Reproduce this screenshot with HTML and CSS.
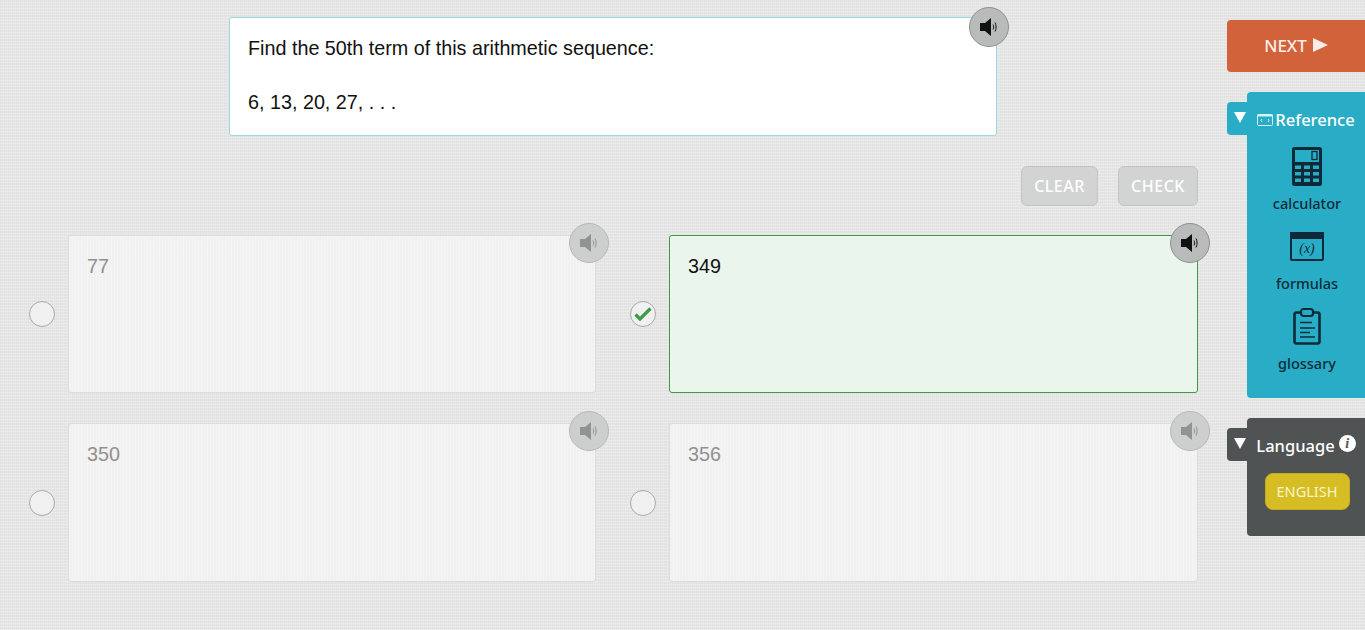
FILE: index.html
```html
<!DOCTYPE html>
<html lang="en">
<head>
    <meta charset="UTF-8">
    <title>Arithmetic sequence question</title>
    <link rel="stylesheet" href="styles.css">
</head>
<body>
    <svg class="defs" width="0" height="0">
        <symbol id="speaker" viewBox="0 0 24 24">
            <path d="M3 8h5l6-5v18l-6-5H3z" fill="currentColor"/>
            <path d="M16 9.500c.9 1.600.9 3.400 0 5M18 7.500c1.500 2.800 1.500 6.200 0 9" fill="none" stroke="currentColor" stroke-width="1"/>
        </symbol>
    </svg>

    <div class="page">
        <main class="main">
            <div class="prompt">
                <p>Find the 50th term of this arithmetic sequence:</p>
                <p>6, 13, 20, 27, . . .</p>
                <button class="speak speak-prompt"><svg><use href="#speaker"/></svg></button>
            </div>

            <div class="actions">
                <button class="action">CLEAR</button>
                <button class="action">CHECK</button>
            </div>

            <div class="answers">
                <div class="answer">
                    <span class="radio"></span>
                    <div class="card">77<button class="speak"><svg><use href="#speaker"/></svg></button></div>
                </div>
                <div class="answer selected">
                    <span class="radio">
                        <svg viewBox="0 0 24 24" width="24" height="24"><path d="M4.500 12.500l4.500 4.500L19.500 6.500" fill="none" stroke="#3d9a45" stroke-width="3.200"/></svg>
                    </span>
                    <div class="card">349<button class="speak"><svg><use href="#speaker"/></svg></button></div>
                </div>
                <div class="answer">
                    <span class="radio"></span>
                    <div class="card">350<button class="speak"><svg><use href="#speaker"/></svg></button></div>
                </div>
                <div class="answer">
                    <span class="radio"></span>
                    <div class="card">356<button class="speak"><svg><use href="#speaker"/></svg></button></div>
                </div>
            </div>
        </main>

        <aside class="side">
            <button class="next">NEXT <svg viewBox="0 0 15 14" width="15" height="14"><path d="M0 0l15 7-15 7z" fill="currentColor"/></svg></button>

            <section class="panel panel-reference">
                <span class="tab"><svg viewBox="0 0 12 11" width="12" height="11"><path d="M0 0h12L6 11z" fill="#fff"/></svg></span>
                <h3 class="panel-title panel-title-tight">
                    <svg viewBox="0 0 16 12" width="16" height="12">
                        <rect x="0.500" y="0.500" width="15" height="11" rx="1" fill="none" stroke="#d8f1f6"/>
                        <rect x="0.500" y="0.500" width="15" height="2" fill="#d8f1f6"/>
                        <path d="M5 5l-1 1.500L5 8M11 5l1 1.500L11 8" fill="none" stroke="#d8f1f6"/>
                    </svg>Reference
                </h3>
                <div class="tool">
                    <svg viewBox="0 0 30 39" width="30" height="39">
                        <rect width="30" height="39" rx="2.500" fill="#0e2a38"/>
                        <rect x="3" y="3" width="24" height="12" fill="#29adc6"/>
                        <rect x="20" y="4.500" width="5" height="8" fill="none" stroke="#0e2a38" stroke-width="1.300"/>
                        <path d="M3 18.500h6v3.500H3zM12 18.500h6v3.500h-6zM21 18.500h6v3.500h-6zM3 25h6v3.500H3zM12 25h6v3.500h-6zM21 25h6v3.500h-6zM3 31.500h6V35H3zM12 31.500h6V35h-6zM21 31.500h6V35h-6z" fill="#29adc6"/>
                    </svg>
                    <span>calculator</span>
                </div>
                <div class="tool">
                    <svg viewBox="0 0 34 29" width="34" height="29">
                        <rect x="1" y="1" width="32" height="27" rx="1" fill="none" stroke="#0e2a38" stroke-width="2"/>
                        <rect width="34" height="7" fill="#0e2a38"/>
                        <text x="17" y="21" class="formula">(x)</text>
                    </svg>
                    <span>formulas</span>
                </div>
                <div class="tool">
                    <svg viewBox="0 0 30 38" width="30" height="38">
                        <rect x="2.500" y="5" width="25" height="31" rx="2" fill="none" stroke="#0e2a38" stroke-width="2.600"/>
                        <rect x="9" y="1.500" width="12" height="7" rx="2.500" fill="#29adc6" stroke="#0e2a38" stroke-width="2.200"/>
                        <path d="M8 15h12M8 20.500h15M8 25h10M8 29.500h15" stroke="#0e2a38" stroke-width="1.500"/>
                    </svg>
                    <span>glossary</span>
                </div>
            </section>

            <section class="panel panel-language">
                <span class="tab"><svg viewBox="0 0 12 11" width="12" height="11"><path d="M0 0h12L6 11z" fill="#fff"/></svg></span>
                <h3 class="panel-title">Language <span class="info">i</span></h3>
                <button class="language">ENGLISH</button>
            </section>
        </aside>
    </div>
</body>
</html>
```

FILE: styles.css
```css
* {
    box-sizing: border-box;
}
body {
    margin: 0;
    height: 630px;
    overflow: hidden;
    font-family: 'Liberation Sans', Arial, sans-serif;
    color: #111;
    background-color: #e6e6e6;
    background-image:
        repeating-linear-gradient(0deg, rgba(255, 255, 255, 0.25) 0 1px, transparent 1px 3px),
        repeating-linear-gradient(90deg, rgba(0, 0, 0, 0.02) 0 1px, transparent 1px 2px);
}
button {
    font-family: inherit;
    border: none;
    padding: 0;
    cursor: pointer;
}
.defs {
    position: absolute;
}
.page {
    display: flex;
    height: 630px;
}
.main {
    width: 1227px;
    padding: 17px 29px 0 29px;
}
.prompt {
    position: relative;
    width: 768px;
    height: 119px;
    margin-left: 200px;
    padding: 17px 18px;
    font-size: 19.750px;
    line-height: 27px;
    background: #fff;
    border: 1px solid #9ad8e3;
    border-radius: 3px;
}
.prompt p {
    margin: 0 0 27px;
}
.speak {
    position: absolute;
    top: -13px;
    right: -14px;
    width: 40px;
    height: 40px;
    display: flex;
    align-items: center;
    justify-content: center;
    color: #929292;
    background: #cdcece;
    border: 1px solid #b9b9b9;
    border-radius: 50%;
}
.speak svg {
    width: 24px;
    height: 24px;
}
.speak-prompt {
    top: -11px;
    right: -12.500px;
    color: #111;
    background: #b9bbbb;
    border-color: #8f9191;
}
.actions {
    display: flex;
    justify-content: flex-end;
    gap: 20px;
    margin-top: 30px;
}
.action {
    width: 77px;
    height: 40px;
    font-family: 'Noto Sans', sans-serif;
    font-size: 16px;
    font-weight: 500;
    letter-spacing: 0.5px;
    color: #fff;
    background: #d2d4d3;
    border: 1px solid #c3c5c4;
    border-radius: 6px;
}
.action + .action {
    width: 80px;
}
.answers {
    display: grid;
    grid-template-columns: 567px 568px;
    grid-template-rows: 158px 159px;
    row-gap: 30px;
    column-gap: 34px;
    margin-top: 29px;
}
.answer {
    display: flex;
    align-items: center;
    gap: 13px;
}
.answer:nth-child(even) .speak {
    right: -13px;
}
.radio {
    flex: none;
    width: 26px;
    height: 26px;
    background: #f0f0f0;
    border: 1px solid #a9a9a9;
    border-radius: 50%;
    display: flex;
    align-items: center;
    justify-content: center;
}
.radio svg {
    flex: none;
}
.card {
    position: relative;
    flex: 1;
    align-self: stretch;
    padding: 17px 18px;
    font-size: 19.750px;
    line-height: 27px;
    color: #909090;
    background-color: #f1f1f1;
    background-image: repeating-linear-gradient(90deg, rgba(255, 255, 255, 0.25) 0 1px, transparent 1px 3px);
    border: 1px solid #dcdcdc;
    border-radius: 3px;
}
.selected .card {
    color: #111;
    background: #eaf5ec;
    border-color: #3d9a45;
}
.selected .speak {
    color: #111;
    background: #b9bbbb;
    border-color: #8f9191;
}
.side {
    width: 138px;
    padding-top: 20px;
}
.next {
    display: flex;
    align-items: center;
    justify-content: center;
    gap: 6px;
    width: 100%;
    height: 52px;
    padding-bottom: 2px;
    font-family: 'Noto Sans', sans-serif;
    font-size: 17px;
    font-weight: 500;
    color: #fbeee8;
    background: #d2623a;
    border-radius: 4px 0 0 4px;
}
.panel {
    position: relative;
    margin-left: 20px;
    border-radius: 4px 0 0 4px;
    text-align: center;
}
.panel-reference {
    height: 306px;
    margin-top: 20px;
    background: #29adc6;
}
.panel-language {
    height: 118px;
    margin-top: 20px;
    background: #4f5354;
}
.tab {
    position: absolute;
    top: 10px;
    left: -20px;
    width: 24px;
    height: 33px;
    padding: 10px 0 0 7px;
    text-align: left;
    background: inherit;
    border-radius: 4px;
}
.tab svg {
    display: block;
}
.panel-title {
    margin: 0;
    padding-top: 16px;
    font-family: 'Noto Sans', sans-serif;
    font-size: 16.500px;
    font-weight: 500;
    line-height: 24px;
    color: #fff;
    display: flex;
    align-items: center;
    justify-content: center;
    gap: 4px;
}
.panel-title-tight {
    gap: 2px;
}
.info {
    width: 17px;
    height: 17px;
    margin-top: -5px;
    font-family: 'Liberation Serif', serif;
    font-size: 14px;
    font-style: italic;
    font-weight: bold;
    line-height: 17px;
    color: #4f5354;
    background: #fff;
    border-radius: 50%;
}
.tool {
    display: flex;
    flex-direction: column;
    align-items: center;
    height: 80px;
    padding-left: 2px;
    font-family: 'Noto Sans', sans-serif;
    font-size: 14.500px;
    font-weight: 500;
    color: #0e2a38;
}
.panel-reference .tool:first-of-type {
    margin-top: 15px;
}
.tool svg {
    height: 46px;
    padding-bottom: 7px;
}
.tool span {
    line-height: 20px;
}
.formula {
    font-family: 'Liberation Serif', serif;
    font-size: 14px;
    font-style: italic;
    font-weight: 400;
    text-anchor: middle;
    fill: #0e2a38;
}
.language {
    width: 85px;
    height: 37px;
    margin-top: 15px;
    margin-left: 2px;
    padding-bottom: 2px;
    font-family: 'Noto Sans', sans-serif;
    font-size: 14.500px;
    color: #fbf5c8;
    background: #d6bd24;
    border: 1px solid #c4ad20;
    border-radius: 8px;
}
```
